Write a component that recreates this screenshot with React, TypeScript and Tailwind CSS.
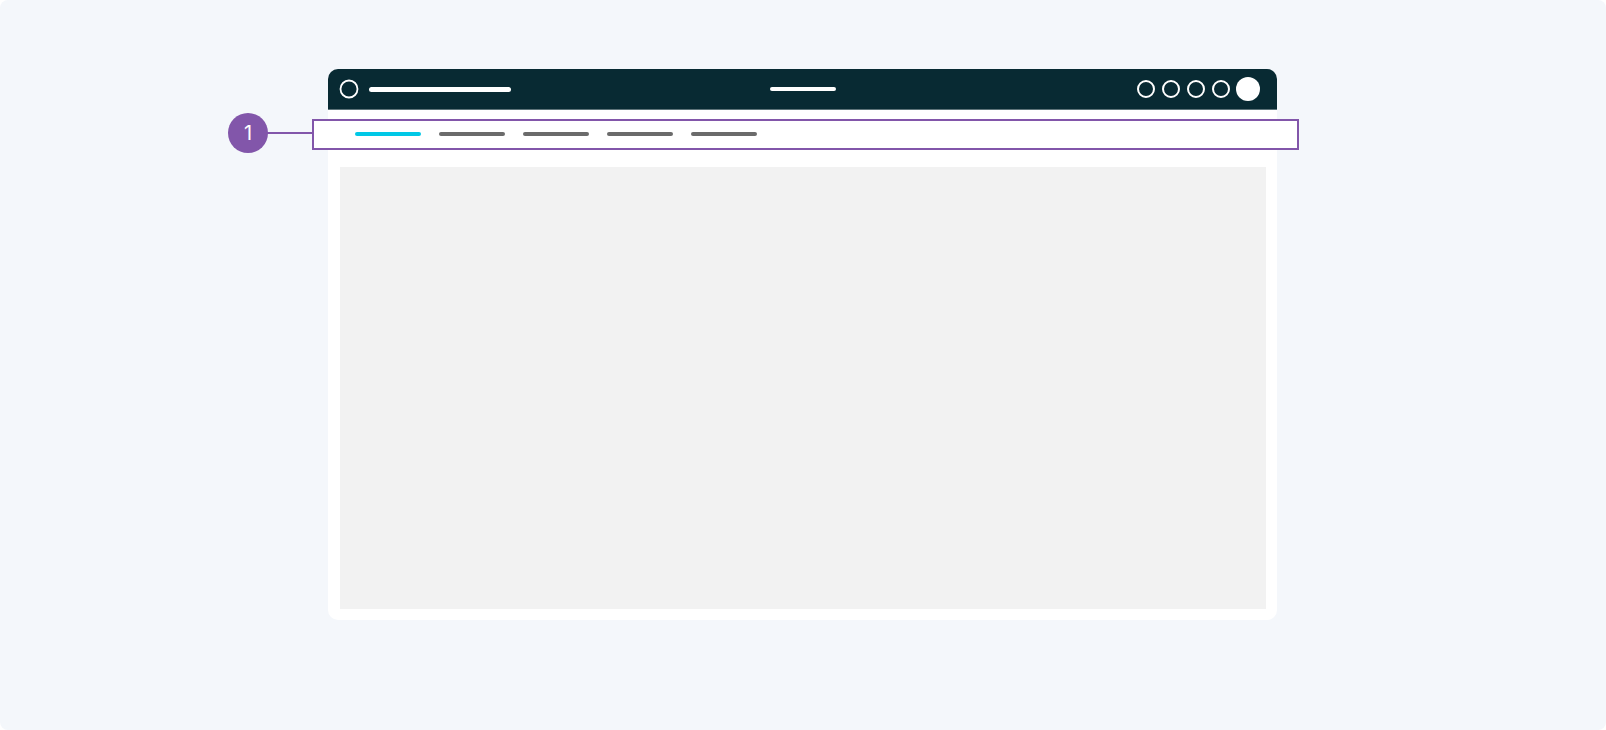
import React from "react";

export default function App() {
  return (
    <div className="w-[1606px] h-[730px] bg-white relative" style={{ fontFamily: "Inter, 'Noto Sans', sans-serif" }}>
      <div className="w-full h-full rounded-[8px] bg-[#f4f7fb] pt-[69px] pl-[328px] relative">
        {/* annotation box fill (behind card) */}
        <div className="absolute left-[312px] top-[119px] w-[987px] h-[31px] bg-white" />
        <div className="w-[949px] h-[551px] flex flex-col relative">
          <div className="h-[41px] bg-[#082a33] rounded-t-[10px] flex items-center pl-[11px] pr-[17px] border-b border-[#5d7379]">
            <svg width="20" height="20" viewBox="0 0 20 20" className="shrink-0">
              <circle cx="10" cy="10" r="8.5" fill="none" stroke="#ffffff" strokeWidth="1.8" />
            </svg>
            <div className="ml-[10px] w-[142px] h-[5px] rounded-full bg-white" />
            <div className="ml-[259px] w-[66px] h-[4px] rounded-full bg-white" />
            <div className="flex-1" />
            <div className="flex items-center gap-[7px]">
              <div className="w-[18px] h-[18px] rounded-full border-[2px] border-white" />
              <div className="w-[18px] h-[18px] rounded-full border-[2px] border-white" />
              <div className="w-[18px] h-[18px] rounded-full border-[2px] border-white" />
              <div className="w-[18px] h-[18px] rounded-full border-[2px] border-white" />
              <div className="ml-[-1px] w-[24px] h-[24px] rounded-full bg-white" />
            </div>
          </div>
          <div className="flex-1 bg-white rounded-b-[10px] flex flex-col pl-[12px] pr-[11px] pb-[11px]">
            <div className="h-[57px] flex items-start gap-[18px] pl-[15px] pt-[22px]">
              <div className="w-[66px] h-[4px] rounded-full bg-[#00c8e6]" />
              <div className="w-[66px] h-[4px] rounded-full bg-[#6b6b6b]" />
              <div className="w-[66px] h-[4px] rounded-full bg-[#6b6b6b]" />
              <div className="w-[66px] h-[4px] rounded-full bg-[#6b6b6b]" />
              <div className="w-[66px] h-[4px] rounded-full bg-[#6b6b6b]" />
            </div>
            <div className="flex-1 bg-[#f2f2f2]" />
          </div>
        </div>
      </div>
      {/* annotation overlay */}
      <div className="absolute left-[312px] top-[119px] w-[987px] h-[31px] border-[2px] border-[#8256aa]" />
      <div className="absolute left-[266px] top-[132px] w-[47px] h-[2px] bg-[#8256aa]" />
      <div className="absolute left-[228px] top-[113px] w-[40px] h-[40px] rounded-full bg-[#8256aa] flex items-center justify-center text-white text-[20px] leading-none">
        1
      </div>
    </div>
  );
}
